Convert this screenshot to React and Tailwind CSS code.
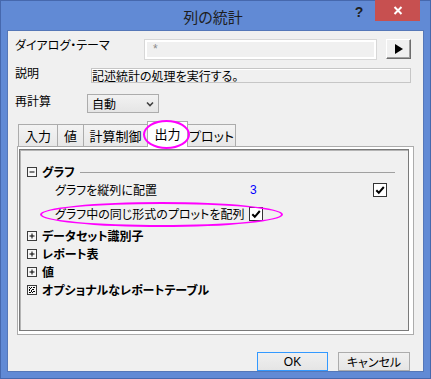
import React from "react";

const font = "font-['Noto_Sans_CJK_JP','Noto_Sans_CJK_SC',sans-serif] [font-feature-settings:'palt']";

function TreeIcon({ kind }) {
  return (
    <svg width="10" height="10" viewBox="0 0 10 10" className="shrink-0">
      <rect x="0.5" y="0.5" width="9" height="9" fill="#f7f7f7" stroke="#3c3c3c" />
      {kind === "minus" && <path d="M2.5 5h5" stroke="#000" strokeWidth="1" />}
      {kind === "plus" && <path d="M2.5 5h5M5 2.5v5" stroke="#000" strokeWidth="1" />}
      {kind === "mixed" && (
        <g fill="#000">
          <rect x="2" y="2" width="1" height="1" />
          <rect x="4" y="2" width="1" height="1" />
          <rect x="6" y="2" width="2" height="1" />
          <rect x="3" y="3" width="1" height="1" />
          <rect x="5" y="4" width="2" height="1" />
          <rect x="2" y="4" width="1" height="2" />
          <rect x="4" y="5" width="1" height="2" />
          <rect x="6" y="6" width="2" height="1" />
          <rect x="2" y="7" width="2" height="1" />
          <rect x="5" y="7" width="1" height="1" />
        </g>
      )}
    </svg>
  );
}

function Check() {
  return (
    <svg width="14" height="14" viewBox="0 0 14 14" className="shrink-0">
      <rect x="0.5" y="0.5" width="13" height="13" fill="#ffffff" stroke="#333333" />
      <path d="M3.3 7.2l2.5 2.6L10.8 4" fill="none" stroke="#000" strokeWidth="2" />
    </svg>
  );
}

function TreeRow({ icon, label, extra = "" }) {
  return (
    <div className={"h-[18px] flex items-center pl-[7px] " + extra}>
      <TreeIcon kind={icon} />
      <span className="ml-[5px] text-[12px] leading-[14px] font-bold text-black whitespace-nowrap">{label}</span>
    </div>
  );
}

export default function App() {
  return (
    <div className={"relative w-[431px] h-[379px] bg-[#618ad5] shadow-[inset_0_0_0_1px_#4668ad] overflow-hidden " + font}>
      {/* Title bar */}
      <div className="h-[31px] flex items-start">
        <div className="w-[78px] shrink-0" />
        <div className="flex-1 text-center pr-[5px] pt-[7px] text-[15px] leading-[20px] text-[#1e1e1e]">列の統計</div>
        <div className="w-[78px] shrink-0 flex items-start">
          <div className="w-[12px] text-center pt-[3px] text-[14px] leading-[18px] font-bold text-[#1f1f1f] font-['Liberation_Sans',sans-serif]">?</div>
          <div className="ml-[10px] w-[45px] h-[21px] bg-[#c75050] flex items-center justify-center">
            <svg width="10" height="9" viewBox="0 0 10 9">
              <path d="M1.5 1l7 7M8.5 1l-7 7" stroke="#ffffff" strokeWidth="2" />
            </svg>
          </div>
        </div>
      </div>

      {/* Client area */}
      <div className="ml-[8px] w-[415px] h-[340px] bg-[#f0f0f0] shadow-[0_0_0_1px_#5577b8] text-[12px] text-black">
        <div className="h-[8px]" />
        {/* Row 1 */}
        <div className="h-[21px] flex items-start">
          <div className="w-[136px] pl-[7px] -mt-[1px] leading-[14px] whitespace-nowrap">ダイアログ・テーマ</div>
          <div className="w-[233px] h-[21px] border border-[#d7d7d7]">
            <div className="h-full border-2 border-white bg-[#f0f0f0] pl-[6px] text-[#8a8a8a] leading-[15px] font-['Liberation_Sans',sans-serif]">*</div>
          </div>
          <div className="ml-[9px] w-[25px] h-[20px] bg-[#f0f0f0] border border-t-white border-l-white border-r-[#6d6d6d] border-b-[#6d6d6d] shadow-[inset_-1px_-1px_0_#a0a0a0] flex items-center justify-center">
            <svg width="8" height="10" viewBox="0 0 8 10">
              <path d="M0 0L8 5L0 10Z" fill="#000" />
            </svg>
          </div>
        </div>
        {/* Row 2 */}
        <div className="mt-[8px] h-[15px] flex items-start">
          <div className="w-[83px] pl-[7px] -mt-[2px] leading-[14px] whitespace-nowrap">説明</div>
          <div className="w-[320px] h-[15px] border border-[#c6c6c6] shadow-[inset_1px_1px_0_#ffffff] leading-[13px] whitespace-nowrap">記述統計の処理を実行する。</div>
        </div>
        {/* Row 3 */}
        <div className="mt-[11px] h-[19px] flex items-start">
          <div className="w-[79px] pl-[7px] leading-[14px] whitespace-nowrap">再計算</div>
          <div className="w-[72px] h-[19px] border border-[#acacac] bg-gradient-to-b from-[#f2f2f2] to-[#e5e5e5] flex items-center justify-between pl-[4px] pr-[4px]">
            <span className="leading-[14px]">自動</span>
            <svg width="8" height="6" viewBox="0 0 8 6">
              <path d="M1 1.5l3 3 3-3" fill="none" stroke="#404040" strokeWidth="1.6" />
            </svg>
          </div>
        </div>
        {/* Tabs */}
        <div className="mt-[11px] h-[22px] flex items-end pl-[10px] text-[13px] leading-[16px]">
          <div className="w-[39px] h-[22px] border-t border-l border-[#acacac] bg-gradient-to-b from-[#f3f3f3] to-[#e8e8e8] flex items-center justify-center">入力</div>
          <div className="w-[26px] h-[22px] border-t border-l border-[#acacac] bg-gradient-to-b from-[#f3f3f3] to-[#e8e8e8] flex items-center justify-center">値</div>
          <div className="w-[64px] h-[22px] border-t border-l border-[#acacac] bg-gradient-to-b from-[#f3f3f3] to-[#e8e8e8] flex items-center justify-center">計算制御</div>
          <div className="relative z-10 w-[41px] h-[26px] -mb-[1px] border-t border-l border-r border-[#acacac] bg-white flex items-center justify-center pb-[2px]">出力</div>
          <div className="w-[48px] h-[22px] border-t border-r border-[#acacac] bg-gradient-to-b from-[#f3f3f3] to-[#e8e8e8] flex items-center justify-center">プロット</div>
        </div>
        {/* Panel */}
        <div className="ml-[9px] w-[397px] h-[189px] border border-[#acacac] bg-white pt-[2px] pl-[1px] pr-[4px] pb-[3px]">
          <div className="h-full border border-[#7a7a7a] shadow-[inset_1px_1px_0_#b4b4b4] bg-[#f0f0f0] pt-[13px]">
            <div className="h-[18px] flex items-center pl-[7px]">
              <TreeIcon kind="minus" />
              <span className="ml-[5px] leading-[14px] font-bold whitespace-nowrap">グラフ</span>
              <div className="flex-1 ml-[5px] mr-[13px] h-px bg-[#a0a0a0]" />
            </div>
            <div className="h-[18px] flex items-center pl-[35px]">
              <span className="w-[195px] leading-[14px] whitespace-nowrap">グラフを縦列に配置</span>
              <span className="text-[#0000ff] leading-[14px] font-['Liberation_Sans',sans-serif]">3</span>
              <div className="flex-1" />
              <div className="mr-[21px]"><Check /></div>
            </div>
            <div className="mt-[6px] h-[18px] flex items-center pl-[35px]">
              <span className="w-[194px] leading-[14px] whitespace-nowrap">グラフ中の同じ形式のプロットを配列</span>
              <Check />
            </div>
            <TreeRow icon="plus" label="データセット識別子" extra="mt-[4px]" />
            <TreeRow icon="plus" label="レポート表" />
            <TreeRow icon="plus" label="値" />
            <TreeRow icon="mixed" label="オプショナルなレポートテーブル" />
          </div>
        </div>
        {/* Buttons */}
        <div className="mt-[17px] flex pl-[249px]">
          <div className="w-[71px] h-[19px] border border-[#3399ff] bg-gradient-to-b from-[#f0f0f0] to-[#e5e5e5] flex items-center justify-center leading-[14px] font-['Liberation_Sans',sans-serif]">OK</div>
          <div className="ml-[10px] w-[72px] h-[19px] border border-[#acacac] bg-gradient-to-b from-[#f0f0f0] to-[#e5e5e5] flex items-center justify-center leading-[14px]">キャンセル</div>
        </div>
      </div>

      {/* Highlight ellipses */}
      <div className="absolute left-[143px] top-[120px] w-[47px] h-[29px] rounded-[50%] border-2 border-[#ff00ff] z-20" />
      <div className="absolute left-[40px] top-[202px] w-[243px] h-[25px] rounded-[50%] border-2 border-[#ff00ff] z-20" />
    </div>
  );
}
